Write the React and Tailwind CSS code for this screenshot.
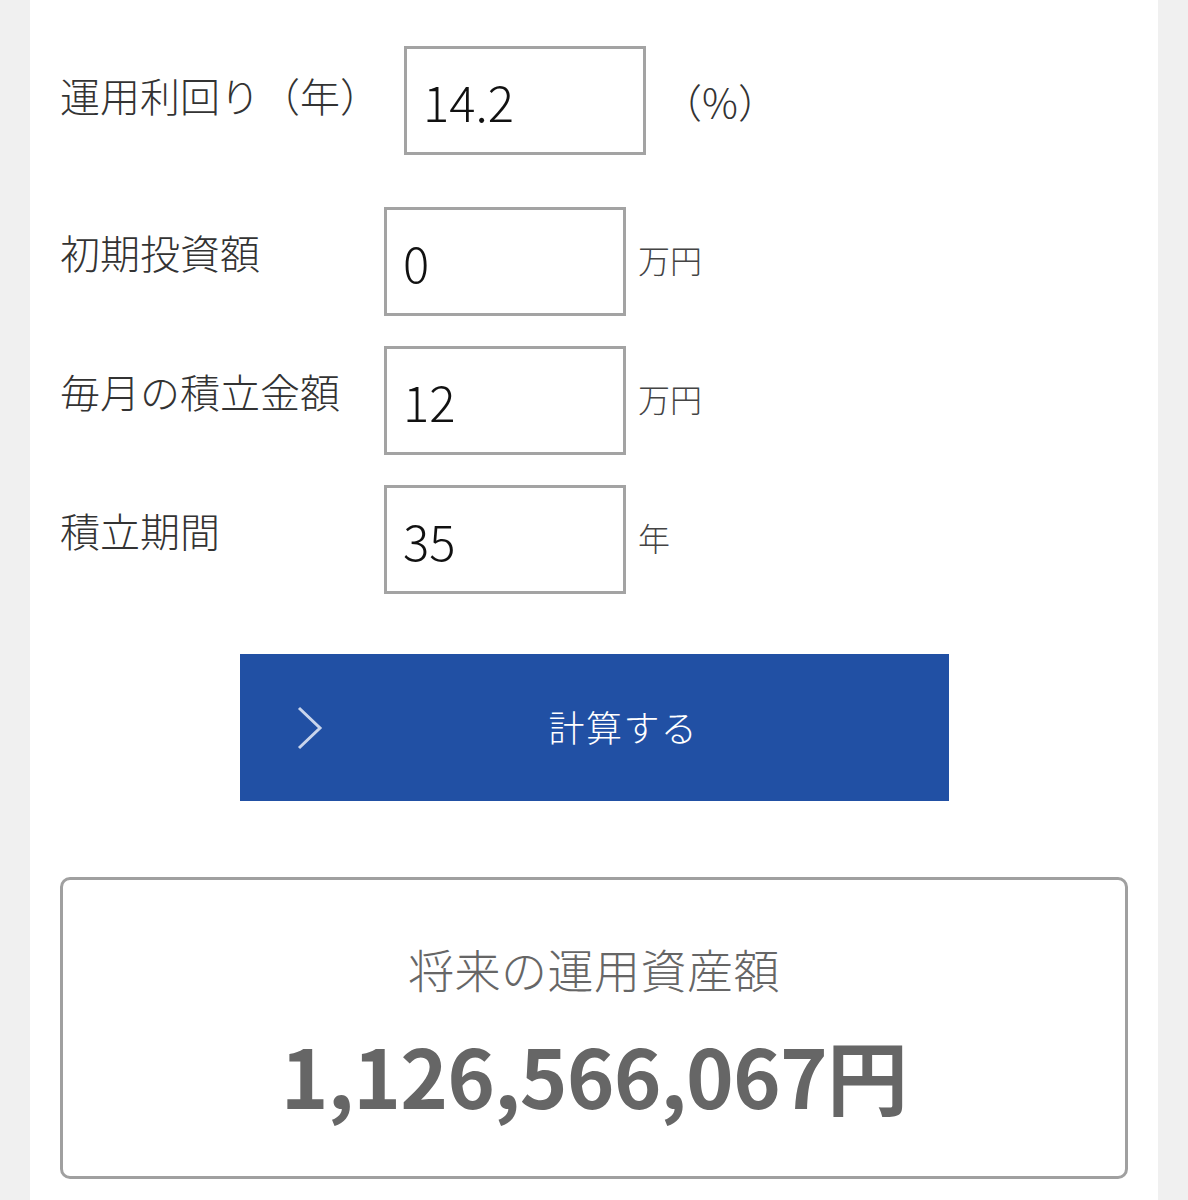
import React from "react";

const font = { fontFamily: '"Noto Sans CJK JP", "Noto Sans", sans-serif' };

const Field = ({ label, value, unit, labelPad, labelWidth, unitClass, mt }) => (
  <div className={`flex items-start ${mt}`}>
    <div
      className={`${labelWidth} shrink-0 ${labelPad} text-[40px] leading-none font-light text-[#333] whitespace-nowrap`}
    >
      {label}
    </div>
    <div className="ml-6 flex items-center">
      <div className="w-[242px] h-[109px] border-[3px] border-[#a3a3a3] bg-white flex items-center pl-4">
        <span className="text-[49px] leading-none font-light text-[#111]">{value}</span>
      </div>
      <span className={unitClass}>{unit}</span>
    </div>
  </div>
);

export default function App() {
  return (
    <div className="min-h-[1200px] bg-[#f0f0f0] px-[30px]" style={font}>
      <div className="bg-white min-h-[1200px] px-[30px] pt-[46px] pb-[22px]">
        <Field
          label="運用利回り（年）"
          value="14.2"
          unit="（%）"
          labelPad="pt-[29px]"
          labelWidth="min-w-[300px]"
          unitClass="ml-4 text-[40px] leading-none font-light text-[#333]"
          mt=""
        />
        <Field
          label="初期投資額"
          value="0"
          unit="万円"
          labelPad="pt-[25px]"
          labelWidth="w-[300px]"
          unitClass="ml-3 text-[32px] leading-none font-light text-[#444] -mt-[6px]"
          mt="mt-[52px]"
        />
        <Field
          label="毎月の積立金額"
          value="12"
          unit="万円"
          labelPad="pt-[25px]"
          labelWidth="w-[300px]"
          unitClass="ml-3 text-[32px] leading-none font-light text-[#444] -mt-[6px]"
          mt="mt-[30px]"
        />
        <Field
          label="積立期間"
          value="35"
          unit="年"
          labelPad="pt-[25px]"
          labelWidth="w-[300px]"
          unitClass="ml-3 text-[32px] leading-none font-light text-[#444] -mt-[6px]"
          mt="mt-[30px]"
        />

        <div className="mt-[60px] flex justify-center">
          <button className="w-[709px] h-[147px] bg-[#2150a4] flex items-center pl-[57px]">
            <svg width="26" height="44" viewBox="0 0 26 44" className="shrink-0">
              <polyline
                points="2,2 23,22 2,42"
                fill="none"
                stroke="#c9d5ec"
                strokeWidth="3"
              />
            </svg>
            <span className="ml-[226px] -mt-[4px] text-[36px] leading-none font-light tracking-[0.04em] text-white">
              計算する
            </span>
          </button>
        </div>

        <div className="mt-[76px] h-[302px] border-[3px] border-[#a0a0a0] rounded-[10px] flex flex-col items-center">
          <div className="mt-[65px] text-[46px] leading-none font-light text-[#666] tracking-[0.01em]">
            将来の運用資産額
          </div>
          <div className="mt-[42px] text-[81px] leading-none font-bold text-[#666] tracking-[-0.01em]">
            1,126,566,067円
          </div>
        </div>
      </div>
    </div>
  );
}
